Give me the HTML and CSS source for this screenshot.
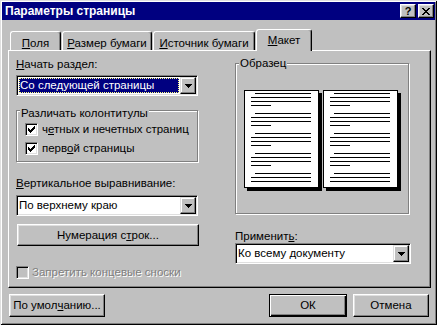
FILE: index.html
```html
<!DOCTYPE html>
<html>
<head>
    <meta charset="UTF-8">
    <title>Параметры страницы</title>
    <link rel="stylesheet" href="styles.css">
</head>
<body>
<div class="window">
    <div class="titlebar">
        <span class="title">Параметры страницы</span>
        <div class="title-buttons">
            <span class="tbtn help">?</span>
            <span class="tbtn close">
                <svg width="8" height="7" viewBox="0 0 8 7"><path d="M0 0h2v1h1v1h2v-1h1v-1h2v1h-1v1h-1v1h-1v1h1v1h1v1h1v1h-2v-1h-1v-1h-2v1h-1v1h-2v-1h1v-1h1v-1h1v-1h-1v-1h-1v-1h-1z"/></svg>
            </span>
        </div>
    </div>

    <div class="content">
        <div class="tabs">
            <div class="tab tab-margins"><u>П</u>оля</div>
            <div class="tab tab-size"><u>Р</u>азмер бумаги</div>
            <div class="tab tab-source"><u>И</u>сточник бумаги</div>
            <div class="tab tab-layout active"><u>М</u>акет</div>
        </div>

        <div class="panel">
            <div class="col-left">
                <div class="label"><u>Н</u>ачать раздел:</div>
                <div class="select">
                    <div class="value selected">Со следующей страницы</div>
                    <span class="drop"><svg width="7" height="4" viewBox="0 0 7 4"><path d="M0 0h7v1h-1v1h-1v1h-1v1h-1v-1h-1v-1h-1v-1h-1z"/></svg></span>
                </div>

                <div class="group group-headers">
                    <div class="group-title">Различать колонтитулы</div>
                    <div class="check-row">
                        <span class="check"><svg width="7" height="7" viewBox="0 0 7 7"><path d="M6 0h1v1h-1zM5 1h2v1h-2zM0 2h1v1h-1zM4 2h3v1h-3zM0 3h2v1h-2zM3 3h3v1h-3zM0 4h5v1h-5zM1 5h3v1h-3zM2 6h1v1h-1z"/></svg></span>
                        <span>ч<u>е</u>тных и нечетных страниц</span>
                    </div>
                    <div class="check-row">
                        <span class="check"><svg width="7" height="7" viewBox="0 0 7 7"><path d="M6 0h1v1h-1zM5 1h2v1h-2zM0 2h1v1h-1zM4 2h3v1h-3zM0 3h2v1h-2zM3 3h3v1h-3zM0 4h5v1h-5zM1 5h3v1h-3zM2 6h1v1h-1z"/></svg></span>
                        <span>перв<u>о</u>й страницы</span>
                    </div>
                </div>

                <div class="label label-valign"><u>В</u>ертикальное выравнивание:</div>
                <div class="select select-valign">
                    <div class="value">По верхнему краю</div>
                    <span class="drop"><svg width="7" height="4" viewBox="0 0 7 4"><path d="M0 0h7v1h-1v1h-1v1h-1v1h-1v-1h-1v-1h-1v-1h-1z"/></svg></span>
                </div>

                <div class="btn btn-lines">Нумерация с<u>т</u>рок...</div>

                <div class="check-row disabled">
                    <span class="check"></span>
                    <span>Запретить концевые сноски</span>
                </div>
            </div>

            <div class="col-right">
                <div class="group group-preview">
                    <div class="group-title">Образец</div>
                    <svg class="preview" width="157" height="101" viewBox="0 0 157 101">
                        <defs>
                            <g id="para">
                                <rect x="11" y="0" width="56" height="1"/>
                                <rect x="7" y="4" width="60" height="1"/>
                                <rect x="7" y="8" width="60" height="1"/>
                                <rect x="7" y="12" width="20" height="1"/>
                            </g>
                            <g id="page">
                                <rect x="3" y="3" width="75" height="98"/>
                                <rect x="0.5" y="0.5" width="74" height="97" fill="#fff" stroke="#000"/>
                                <use href="#para" y="3"/>
                                <use href="#para" y="23"/>
                                <use href="#para" y="43"/>
                                <use href="#para" y="63"/>
                                <rect x="11" y="83" width="56" height="1"/>
                                <rect x="7" y="87" width="60" height="1"/>
                                <rect x="7" y="91" width="60" height="1"/>
                            </g>
                        </defs>
                        <use href="#page"/>
                        <use href="#page" x="79"/>
                    </svg>
                </div>

                <div class="label label-apply">Применит<u>ь</u>:</div>
                <div class="select">
                    <div class="value">Ко всему документу</div>
                    <span class="drop"><svg width="7" height="4" viewBox="0 0 7 4"><path d="M0 0h7v1h-1v1h-1v1h-1v1h-1v-1h-1v-1h-1v-1h-1z"/></svg></span>
                </div>
            </div>
        </div>

        <div class="footer">
            <div class="btn btn-default-set">По умол<u>ч</u>анию...</div>
            <div class="spacer"></div>
            <div class="btn btn-ok default">ОК</div>
            <div class="btn btn-cancel">Отмена</div>
        </div>
    </div>
</div>
</body>
</html>
```

FILE: styles.css
```css
body {
    margin: 0;
    background-color: #c0c0c0;
    font-family: "Liberation Sans", Arial, sans-serif;
    font-size: 11.5px;
    line-height: 13px;
    color: #000;
}

u {
    text-underline-offset: 1px;
}

.window {
    width: 437px;
    height: 325px;
    box-sizing: border-box;
    padding: 2px;
    background-color: #c0c0c0;
    box-shadow: inset 1px 1px 0 #dfdfdf, inset -1px -1px 0 #000,
                inset 2px 2px 0 #fff, inset -2px -2px 0 #808080;
}

/* заголовок окна */
.titlebar {
    height: 18px;
    background-color: #000080;
    display: flex;
    align-items: center;
    justify-content: space-between;
    padding-left: 3px;
}

.title {
    color: #fff;
    font-weight: bold;
    font-size: 12px;
}

.title-buttons {
    display: flex;
    gap: 2px;
    margin-right: 1px;
}

.tbtn {
    width: 16px;
    height: 14px;
    box-sizing: border-box;
    background-color: #c0c0c0;
    border: 1px solid;
    border-color: #fff #000 #000 #fff;
    box-shadow: inset -1px -1px 0 #808080, inset 1px 1px 0 #dfdfdf;
    display: flex;
    align-items: center;
    justify-content: center;
    font-weight: bold;
    font-size: 11px;
    line-height: 11px;
}

/* вкладки */
.content {
    padding: 0 4px 0 6px;
}

.tabs {
    margin-top: 9px;
    height: 21px;
    display: flex;
    align-items: flex-end;
    padding-left: 2px;
}

.tab {
    height: 19px;
    box-sizing: border-box;
    padding-top: 5px;
    margin-right: 1px;
    text-align: center;
    border-top: 1px solid #fff;
    border-left: 1px solid #fff;
    border-right: 1px solid #000;
    border-radius: 3px 3px 0 0;
    box-shadow: inset -1px 0 0 #808080;
}

.tab-margins { width: 51px; }
.tab-size { width: 90px; }
.tab-source { width: 102px; }
.tab-layout { width: 56px; }

.tab.active {
    height: 22px;
    padding-top: 4px;
    margin-bottom: -1px;
    position: relative;
    z-index: 1;
    background-color: #c0c0c0;
}

.panel {
    height: 238px;
    box-sizing: border-box;
    border: 1px solid;
    border-color: #fff #000 #000 #fff;
    box-shadow: inset -1px -1px 0 #808080;
    display: flex;
    padding-left: 7px;
}

.col-left {
    width: 182px;
    padding-top: 7px;
}

.col-right {
    width: 176px;
    margin-left: 37px;
}

.label-valign {
    margin-top: 15px;
}

.label-apply {
    margin-top: 16px;
}

/* выпадающие списки */
.select {
    height: 21px;
    box-sizing: border-box;
    margin-top: 4px;
    padding: 1px;
    background-color: #fff;
    border: 1px solid;
    border-color: #808080 #fff #fff #808080;
    box-shadow: inset 1px 1px 0 #000, inset -1px -1px 0 #dfdfdf;
    display: flex;
}

.select-valign {
    margin-top: 5px;
}

.label-apply + .select {
    margin-top: 0;
}

.select .value {
    flex: 1;
    padding-left: 1px;
    line-height: 17px;
    white-space: nowrap;
    overflow: hidden;
}

.select .value.selected {
    margin: 1px;
    padding-left: 0;
    line-height: 13px;
    background-color: #000080;
    color: #fff;
    border: 1px dotted #ffff80;
}

.drop {
    width: 16px;
    height: 17px;
    box-sizing: border-box;
    background-color: #c0c0c0;
    border: 1px solid;
    border-color: #dfdfdf #000 #000 #dfdfdf;
    box-shadow: inset -1px -1px 0 #808080, inset 1px 1px 0 #fff;
    display: flex;
    align-items: center;
    justify-content: center;
}

/* рамки групп */
.group {
    box-sizing: border-box;
    border: 1px solid #808080;
    box-shadow: 1px 1px 0 #fff, inset 1px 1px 0 #fff;
}

.group-title {
    display: table;
    margin: -7px 0 0 3px;
    padding: 0 1px;
    background-color: #c0c0c0;
}

.group-headers {
    margin-top: 14px;
    padding: 3px 0 3px 0;
}

.group-headers .check-row {
    padding-left: 8px;
}

.group-preview {
    margin-top: 12px;
    width: 174px;
    height: 151px;
}

.preview {
    display: block;
    margin: 20px 0 0 8px;
}

/* флажки */
.check-row {
    height: 19px;
    display: flex;
    align-items: center;
    gap: 4px;
}

.check {
    width: 13px;
    height: 13px;
    box-sizing: border-box;
    background-color: #fff;
    border: 1px solid;
    border-color: #808080 #fff #fff #808080;
    box-shadow: inset 1px 1px 0 #000, inset -1px -1px 0 #dfdfdf;
    display: flex;
    align-items: center;
    justify-content: center;
}

.check-row.disabled {
    margin-top: 17px;
    gap: 3px;
    color: #808080;
    text-shadow: 1px 1px 0 #fff;
}

.check-row.disabled .check {
    background-color: #c0c0c0;
}

/* кнопки */
.btn {
    height: 23px;
    box-sizing: border-box;
    background-color: #c0c0c0;
    border: 1px solid;
    border-color: #fff #000 #000 #fff;
    box-shadow: inset -1px -1px 0 #808080, inset 1px 1px 0 #dfdfdf;
    display: flex;
    align-items: center;
    justify-content: center;
}

.btn-lines {
    height: 22px;
    margin: 8px 0 0 1px;
    width: 182px;
}

.footer {
    margin-top: 6px;
    display: flex;
}

.btn-default-set {
    width: 96px;
    margin-left: 1px;
}

.spacer {
    flex: 1;
}

.btn-ok {
    width: 78px;
    margin-right: 6px;
}

.btn.default {
    border-color: #000;
    box-shadow: inset 1px 1px 0 #fff, inset -1px -1px 0 #000, inset -2px -2px 0 #808080;
}

.btn-cancel {
    width: 76px;
    margin-right: 2px;
}
```
